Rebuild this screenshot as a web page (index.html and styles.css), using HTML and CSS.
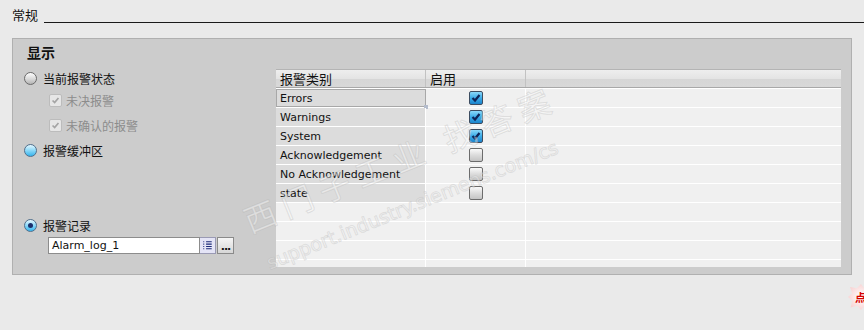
FILE: index.html
```html
<!doctype html>
<html>
<head>
<meta charset="utf-8">
<title>常规</title>
<link rel="stylesheet" href="styles.css">
</head>
<body>

<div class="top">
	<span class="top-title">常规</span>
	<span class="top-line"></span>
</div>

<div class="panel">
	<div class="panel-title">显示</div>
	<div class="panel-body">
		<div class="opts">
			<div class="opt opt-r1"><span class="radio"></span><span>当前报警状态</span></div>
			<div class="opt opt-sub opt-c1"><span class="cb-dis"><svg viewBox="0 0 13 13"><path d="M3 6.5 L5.5 9 L10 3.5"/></svg></span><span>未决报警</span></div>
			<div class="opt opt-sub opt-c2"><span class="cb-dis"><svg viewBox="0 0 13 13"><path d="M3 6.5 L5.5 9 L10 3.5"/></svg></span><span>未确认的报警</span></div>
			<div class="opt opt-r2"><span class="radio hover"></span><span class="txt">报警缓冲区</span></div>
			<div class="opt opt-r3"><span class="radio on"></span><span class="txt">报警记录</span></div>
			<div class="field">
				<span class="field-input">Alarm_log_1</span>
				<span class="field-list">
					<svg viewBox="0 0 15 16"><path d="M3 4h1M6 4h6M3 6.5h1M6 6.5h6M3 9h1M6 9h6M3 11.5h1M6 11.5h6"/></svg>
				</span>
				<span class="field-more">...</span>
			</div>
		</div>

		<div class="grid">
			<div class="row head">
				<div class="cell c1">报警类别</div>
				<div class="cell c2">启用</div>
				<div class="cell c3"></div>
			</div>
			<div class="row">
				<div class="cell c1 named sel">Errors<i class="handle"></i></div>
				<div class="cell c2"><span class="cb on"><svg viewBox="0 0 12 12"><path d="M2.5 6 L5 8.5 L9.5 3"/></svg></span></div>
				<div class="cell c3"></div>
			</div>
			<div class="row">
				<div class="cell c1 named">Warnings</div>
				<div class="cell c2"><span class="cb on"><svg viewBox="0 0 12 12"><path d="M2.5 6 L5 8.5 L9.5 3"/></svg></span></div>
				<div class="cell c3"></div>
			</div>
			<div class="row">
				<div class="cell c1 named">System</div>
				<div class="cell c2"><span class="cb on"><svg viewBox="0 0 12 12"><path d="M2.5 6 L5 8.5 L9.5 3"/></svg></span></div>
				<div class="cell c3"></div>
			</div>
			<div class="row">
				<div class="cell c1 named">Acknowledgement</div>
				<div class="cell c2"><span class="cb"></span></div>
				<div class="cell c3"></div>
			</div>
			<div class="row">
				<div class="cell c1 named">No Acknowledgement</div>
				<div class="cell c2"><span class="cb"></span></div>
				<div class="cell c3"></div>
			</div>
			<div class="row">
				<div class="cell c1 named">state</div>
				<div class="cell c2"><span class="cb"></span></div>
				<div class="cell c3"></div>
			</div>
			<div class="row"><div class="cell c1"></div><div class="cell c2"></div><div class="cell c3"></div></div>
			<div class="row"><div class="cell c1"></div><div class="cell c2"></div><div class="cell c3"></div></div>
			<div class="row"><div class="cell c1"></div><div class="cell c2"></div><div class="cell c3"></div></div>
			<div class="row"><div class="cell c1"></div><div class="cell c2"></div><div class="cell c3"></div></div>
		</div>
	</div>

	<div class="mark">
		<div class="mark-cn">西门子工业 找答案</div>
		<div class="mark-en">support.industry.siemens.com/cs</div>
	</div>
</div>

<div class="badge"><span>点</span></div>

</body>
</html>
```

FILE: styles.css
```css
* { padding: 0; margin: 0; box-sizing: border-box; }

body {
	width: 864px;
	height: 330px;
	overflow: hidden;
	background: #eaeaea;
	color: #111;
	font-family: "DejaVu Sans", "Noto Sans CJK SC", sans-serif;
	font-size: 12px;
	position: relative;
}

/* 常规 title line */
.top {
	display: flex;
	align-items: flex-end;
	height: 23px;
	padding-left: 12px;
	margin-bottom: 15px;
}
.top-title {
	font-family: "Noto Sans CJK SC", sans-serif;
	font-size: 13px;
	line-height: 16px;
}
.top-line {
	flex: 1;
	height: 1px;
	margin-left: 6px;
	background: #1a1a1a;
}

/* panel */
.panel {
	position: relative;
	width: 840px;
	height: 237px;
	margin-left: 12px;
	border: 1px solid #b0b0b0;
	background: #cccccc;
	overflow: hidden;
}
.panel-title {
	height: 30px;
	padding: 5px 0 0 14px;
	font-family: "Noto Sans CJK SC", sans-serif;
	font-size: 14px;
	font-weight: bold;
	line-height: 16px;
}
.panel-body {
	display: flex;
}

/* options */
.opts {
	width: 263px;
	font-family: "Noto Sans CJK SC", sans-serif;
	font-size: 12px;
}
.opt {
	display: flex;
	align-items: center;
	height: 19px;
	padding-left: 11px;
}
.opt .radio { margin-right: 6px; }
.opt-sub {
	padding-left: 36px;
	color: #8c8c8c;
}
.opt-c1 { margin-top: 3px; }
.opt-c2 { margin-top: 6px; }
.opt-r2 { margin-top: 6px; }
.opt-r3 { margin-top: 56px; }

.radio {
	width: 13px;
	height: 13px;
	border-radius: 50%;
	border: 1px solid #6a6a6a;
	background: linear-gradient(#fdfdfd, #d8d8d8 55%, #b4b4b4);
	display: flex;
	align-items: center;
	justify-content: center;
}
.radio.hover {
	border-color: #4f6f8c;
	background: linear-gradient(#e6f8ff, #8ad8f8 50%, #36b4ec);
}
.radio.on {
	border-color: #4f6f8c;
	background: linear-gradient(#e6f8ff, #8ad8f8 50%, #36b4ec);
}
.radio.on:after {
	content: "";
	width: 5px;
	height: 5px;
	border-radius: 50%;
	background: #1c2f6a;
}

.cb-dis {
	width: 13px;
	height: 13px;
	margin-right: 4px;
	border: 1px solid #bcbcbc;
	border-radius: 2px;
	background: #e6e6e6;
}
.cb-dis svg {
	display: block;
	width: 11px;
	height: 11px;
	fill: none;
	stroke: #a4a4a4;
	stroke-width: 2;
}

.field {
	display: flex;
	margin: 2px 0 0 35px;
	height: 17px;
}
.field-input {
	width: 152px;
	border: 1px solid #8c8c8c;
	background: #fff;
	padding-left: 3px;
	font-family: "DejaVu Sans", sans-serif;
	font-size: 11px;
	line-height: 15px;
}
.field-list {
	width: 16px;
	border: 1px solid #9a9ab4;
	border-left: none;
	background: #e4e4f6;
}
.field-list svg {
	display: block;
	width: 15px;
	height: 15px;
	stroke: #1c2a78;
	stroke-width: 1.2;
}
.field-more {
	width: 17px;
	margin-left: 1px;
	border: 1px solid #8a8a8a;
	background: linear-gradient(#f6f6f6, #d6d6d6);
	font-family: "DejaVu Sans", sans-serif;
	font-size: 11px;
	font-weight: bold;
	line-height: 17px;
	text-align: center;
	letter-spacing: -1px;
}

/* table */
.grid {
	width: 565px;
	height: 198px;
	background: #f0f0f0;
	overflow: hidden;
}
.row {
	display: flex;
	height: 19px;
	border-top: 1px solid #fff;
}
.cell {
	height: 18px;
	border-right: 1px solid #fff;
	padding-left: 4px;
	font-size: 11px;
	line-height: 19px;
	white-space: nowrap;
	position: relative;
}
.c1 { width: 150px; }
.c2 {
	width: 100px;
	display: flex;
	align-items: center;
	justify-content: center;
	padding-left: 0;
}
.c3 { flex: 1; border-right: none; }

.row.head {
	height: 19px;
	border-top: 1px solid #b4b4b4;
	border-bottom: 1px solid #a8a8a8;
	background: linear-gradient(#eeeeee, #e4e4e4 50%, #d6d6d6 55%, #d8d8d8);
}
.head .cell {
	height: 17px;
	line-height: 17px;
	font-family: "Noto Sans CJK SC", sans-serif;
	font-size: 13px;
	border-right: 1px solid #c2c2c2;
}
.head .c2 {
	justify-content: flex-start;
	padding-left: 4px;
}
.head .c3 { border-right: none; }

.named { background: #dcdcdc; }
.sel { border: 1px solid #a8a8a8; padding-left: 3px; line-height: 17px; }
.handle {
	position: absolute;
	right: -3px;
	bottom: -3px;
	width: 4px;
	height: 4px;
	background: #b4bccc;
}

.cb {
	width: 14px;
	height: 14px;
	border: 1px solid #6c6c6c;
	border-radius: 2px;
	background: linear-gradient(#fafafa, #dcdcdc 50%, #c4c4c4);
}
.cb.on {
	border-color: #3c4c60;
	background: linear-gradient(#8ad8fa, #3cace8 50%, #1c84cc);
}
.cb svg {
	display: block;
	width: 12px;
	height: 12px;
	fill: none;
	stroke: #0e2458;
	stroke-width: 2.2;
}

/* watermark over the table */
.mark {
	position: absolute;
	left: 225px;
	top: 165px;
	transform: rotate(-22deg);
	transform-origin: left top;
	pointer-events: none;
	color: rgba(255, 255, 255, 0.4);
	-webkit-text-stroke: 1px rgba(165, 165, 165, 0.28);
	white-space: nowrap;
}
.mark-cn {
	font-family: "Noto Sans CJK SC", sans-serif;
	font-size: 32px;
	line-height: 36px;
	letter-spacing: 8px;
}
.mark-en {
	margin: 18px 0 0 5px;
	font-family: "DejaVu Sans", sans-serif;
	font-size: 19px;
	line-height: 24px;
}

/* corner badge */
.badge {
	position: absolute;
	left: 848px;
	top: 284px;
	width: 26px;
	height: 26px;
	clip-path: polygon(50% 0, 62% 16%, 84% 8%, 82% 32%, 100% 45%, 84% 60%, 92% 86%, 66% 82%, 50% 100%, 36% 84%, 10% 90%, 16% 64%, 0 50%, 16% 36%, 8% 12%, 34% 16%);
	background: radial-gradient(#ffffff, #f6c4c4);
	color: #d40000;
	font-family: "Noto Sans CJK SC", sans-serif;
	font-size: 11px;
	font-weight: bold;
	line-height: 26px;
	padding-left: 7px;
}
```
